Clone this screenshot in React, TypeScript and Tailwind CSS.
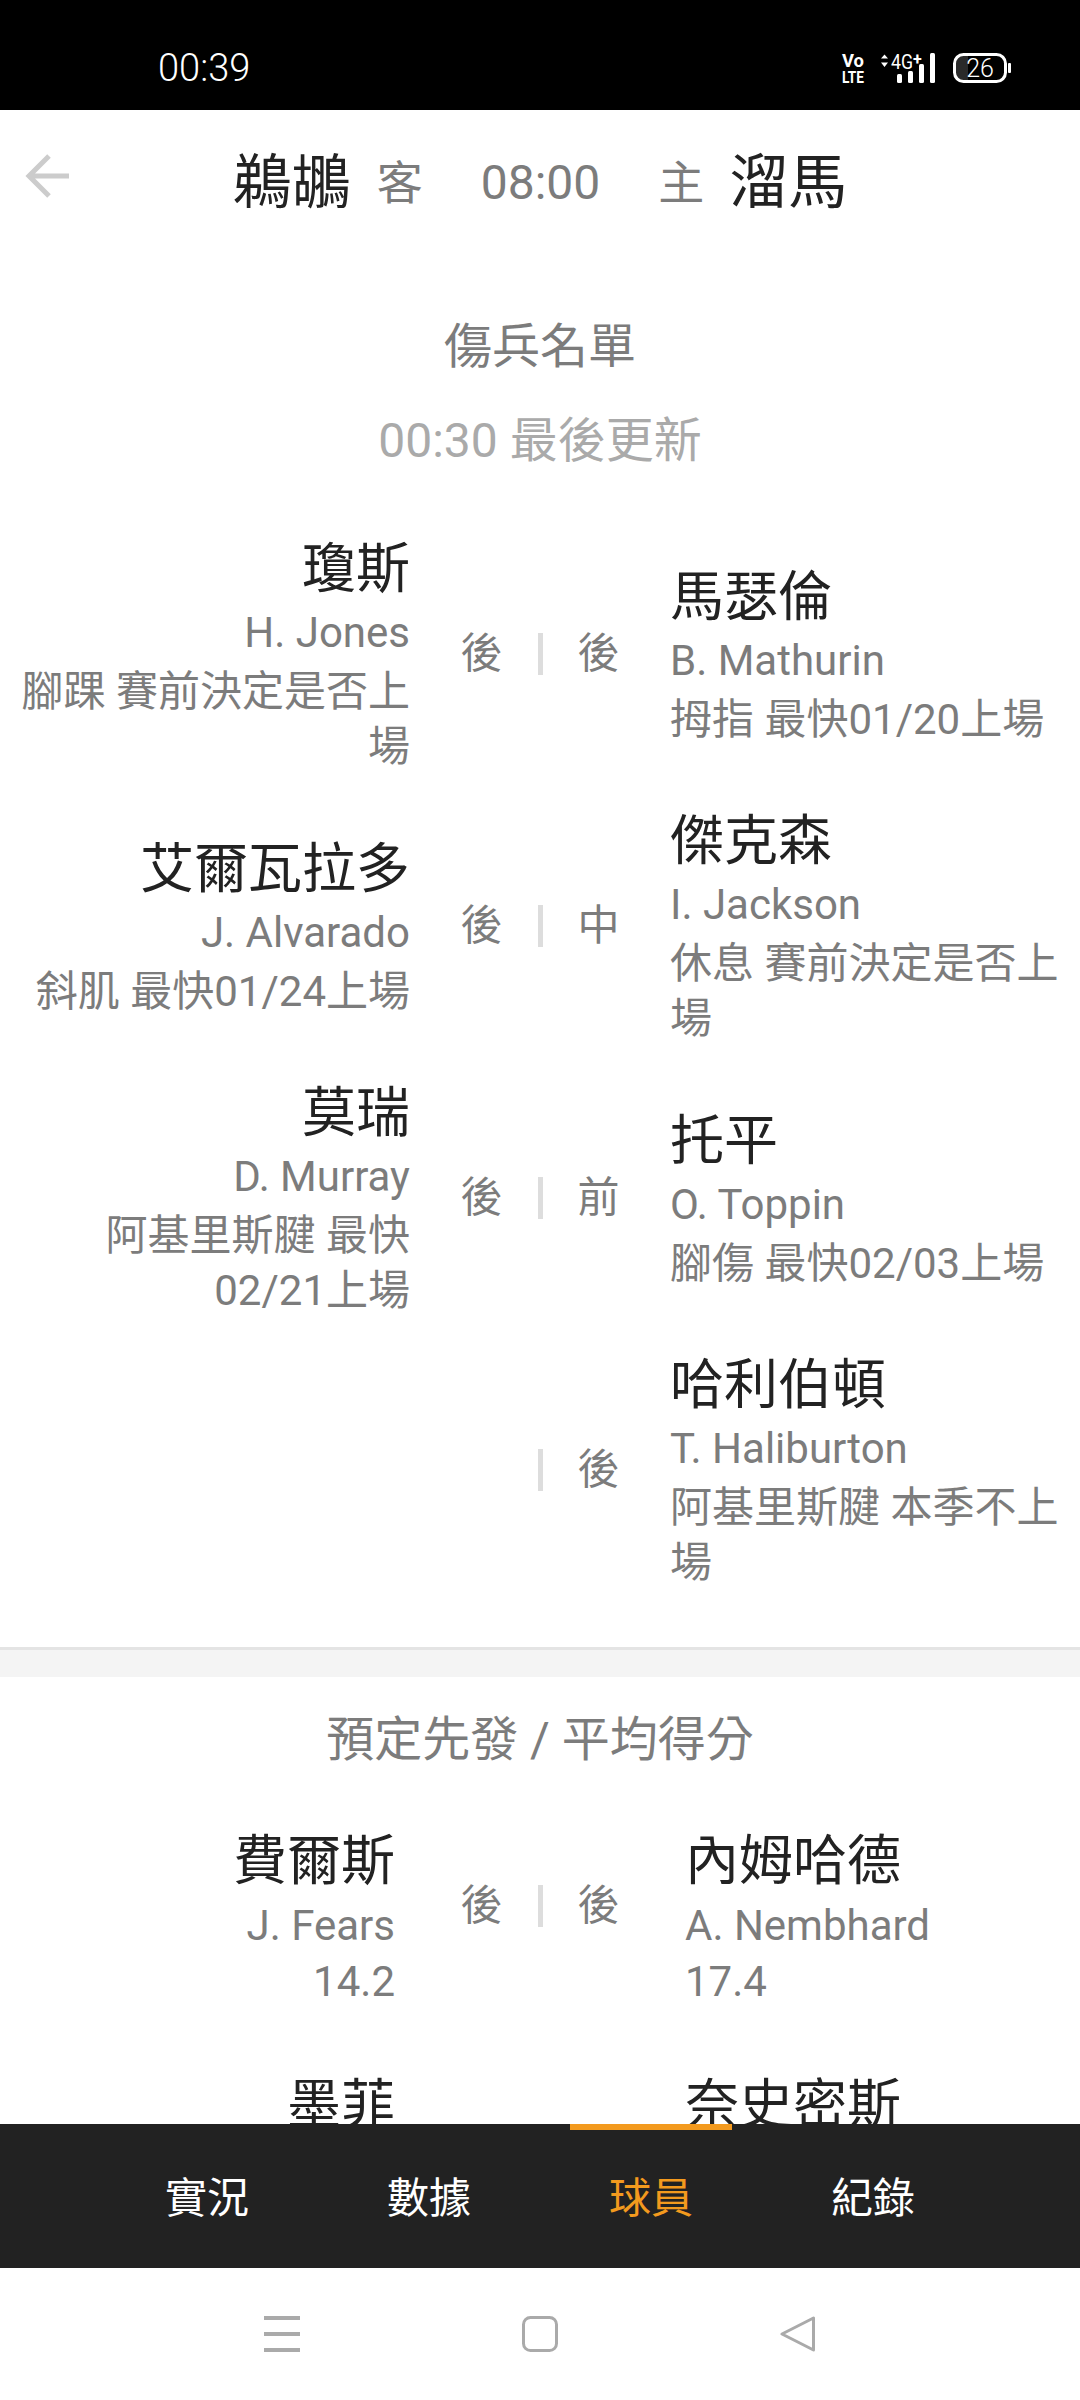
const sans = "font-['Roboto','Noto_Sans_CJK_TC','Noto_Sans',sans-serif]";

type Side = { name: string; en?: string; note?: string; pos?: string };

function Block({ p, align }: { p: Side; align: 'left' | 'right' }) {
  return (
    <div className={align === 'right' ? 'text-right' : 'text-left'}>
      <div className="mt-[1px] -mb-[1px] text-[54px] leading-[72px] text-[#222222]">{p.name}</div>
      {p.en && <div className="text-[42px] leading-[56px] text-[#7c7c7c]">{p.en}</div>}
      {p.note && <div className="mt-[3px] text-[42px] leading-[55px] text-[#7c7c7c]">{p.note}</div>}
    </div>
  );
}

function Middle({ left, right }: { left?: string; right?: string }) {
  return (
    <div className="flex items-center justify-center gap-[35px] text-[42px] leading-[54px] text-[#7c7c7c]">
      <span className="w-[42px] text-center">{left}</span>
      <span className="h-[42px] w-[5px] bg-[#dddddd]" />
      <span className="w-[42px] text-center">{right}</span>
    </div>
  );
}

function InjuryRow({ l, r }: { l?: Side; r: Side }) {
  return (
    <div className="flex items-center">
      <div className="w-[410px] shrink-0 pl-[20px]">{l && <Block p={l} align="right" />}</div>
      <div className="w-[260px] shrink-0">
        <Middle left={l?.pos} right={r.pos} />
      </div>
      <div className="w-[395px] shrink-0">
        <Block p={r} align="left" />
      </div>
    </div>
  );
}

function StarterRow({ l, r }: { l: Side; r: Side }) {
  return (
    <div className="flex items-center">
      <div className="w-[395px] shrink-0">
        <StarterBlock p={l} align="right" />
      </div>
      <div className="w-[290px] shrink-0 pb-[24px]">{l.pos && <Middle left={l.pos} right={r.pos} />}</div>
      <div className="w-[395px] shrink-0">
        <StarterBlock p={r} align="left" />
      </div>
    </div>
  );
}

function StarterBlock({ p, align }: { p: Side; align: 'left' | 'right' }) {
  return (
    <div className={align === 'right' ? 'text-right' : 'text-left'}>
      <div className="text-[54px] leading-[72px] text-[#222222]">{p.name}</div>
      {p.en && <div className="text-[42px] leading-[56px] text-[#7c7c7c]">{p.en}</div>}
      {p.note && <div className="text-[42px] leading-[56px] text-[#7c7c7c]">{p.note}</div>}
    </div>
  );
}

function StatusIcons() {
  return (
    <svg width="180" height="40" viewBox="840 50 180 40" className="block">
      <text x="853" y="68" fill="#fff" fontSize="18" fontWeight="700" textAnchor="middle" fontFamily="Roboto, sans-serif" textLength="22" lengthAdjust="spacingAndGlyphs">Vo</text>
      <text x="853" y="84" fill="#fff" fontSize="16" fontWeight="700" textAnchor="middle" fontFamily="Roboto, sans-serif" textLength="22" lengthAdjust="spacingAndGlyphs">LTE</text>
      <path d="M881 59.5L884.5 55.5L888 59.5ZM881 63.5L884.5 68L888 63.5Z" fill="#fff" />
      <text x="891" y="70" fill="#fff" fontSize="20" fontFamily="Roboto, sans-serif" textLength="22" lengthAdjust="spacingAndGlyphs">4G</text>
      <text x="913" y="66" fill="#fff" fontSize="16" fontWeight="700" fontFamily="Roboto, sans-serif">+</text>
      <rect x="897" y="75" width="5" height="9" rx="1.5" fill="#fff" />
      <rect x="908" y="72" width="5" height="12" rx="1.5" fill="#fff" />
      <rect x="919" y="65" width="5" height="19" rx="1.5" fill="#fff" />
      <rect x="930" y="54" width="5" height="30" rx="1.5" fill="#fff" />
      <rect x="956" y="57" width="12" height="24" fill="#2a2a2a" />
      <rect x="954.5" y="55.5" width="51" height="27" rx="9" fill="none" stroke="#fff" strokeWidth="3" />
      <rect x="1008" y="64" width="3" height="10" rx="1" fill="#fff" />
      <text x="980" y="78" fill="#fff" fontSize="25" fontWeight="300" textAnchor="middle" fontFamily="Roboto, sans-serif">26</text>
    </svg>
  );
}

export default function App() {
  return (
    <div className={`flex h-[2400px] w-[1080px] flex-col overflow-hidden bg-white ${sans}`}>
      <div className="flex h-[110px] shrink-0 items-center justify-between bg-black pl-[158px] pr-[60px] pt-[28px]">
        <span className="-mt-[2px] text-[38px] font-light leading-none text-white">00:39</span>
        <div className="-mt-[1px]">
          <StatusIcons />
        </div>
      </div>

      <div className="relative flex h-[146px] shrink-0 items-center justify-center">
        <svg className="absolute left-[25px] top-[43px]" width="46" height="46" viewBox="0 0 46 46" fill="none" stroke="#cccccc" strokeWidth="5">
          <path d="M44 23H5M24 3L4 23L24 43" />
        </svg>
        <span className="text-[59px] leading-[72px] text-[#222222]">鵜鶘</span>
        <span className="ml-[26px] text-[46px] leading-[60px] text-[#7c7c7c]">客</span>
        <span className="ml-[58px] text-[48px] leading-[60px] text-[#7c7c7c]">08:00</span>
        <span className="ml-[58px] text-[46px] leading-[60px] text-[#7c7c7c]">主</span>
        <span className="ml-[25px] text-[59px] leading-[72px] text-[#222222]">溜馬</span>
      </div>

      <div className="relative min-h-0 flex-1 overflow-hidden">
        <div className="pt-[61px] text-center text-[48px] leading-[60px] text-[#7c7c7c]">傷兵名單</div>
        <div className="mt-[34px] text-center text-[48px] leading-[60px] text-[#aaaaaa]">00:30 最後更新</div>

        <div className="mt-[62px] flex flex-col gap-[31px]">
          <InjuryRow
            l={{ name: '瓊斯', en: 'H. Jones', note: '腳踝 賽前決定是否上場', pos: '後' }}
            r={{ name: '馬瑟倫', en: 'B. Mathurin', note: '拇指 最快01/20上場', pos: '後' }}
          />
          <InjuryRow
            l={{ name: '艾爾瓦拉多', en: 'J. Alvarado', note: '斜肌 最快01/24上場', pos: '後' }}
            r={{ name: '傑克森', en: 'I. Jackson', note: '休息 賽前決定是否上場', pos: '中' }}
          />
          <InjuryRow
            l={{ name: '莫瑞', en: 'D. Murray', note: '阿基里斯腱 最快02/21上場', pos: '後' }}
            r={{ name: '托平', en: 'O. Toppin', note: '腳傷 最快02/03上場', pos: '前' }}
          />
          <InjuryRow r={{ name: '哈利伯頓', en: 'T. Haliburton', note: '阿基里斯腱 本季不上場', pos: '後' }} />
        </div>

        <div className="mt-[57px] h-[30px] border-t-[3px] border-[#e4e4e4] bg-[#f4f4f4]" />

        <div className="mt-[33px] text-center text-[48px] leading-[60px] text-[#7c7c7c]">預定先發 / 平均得分</div>

        <div className="mt-[56px] flex flex-col gap-[60px]">
          <StarterRow
            l={{ name: '費爾斯', en: 'J. Fears', note: '14.2', pos: '後' }}
            r={{ name: '內姆哈德', en: 'A. Nembhard', note: '17.4', pos: '後' }}
          />
          <StarterRow l={{ name: '墨菲' }} r={{ name: '奈史密斯' }} />
        </div>
      </div>

      <div className="relative h-[144px] shrink-0 bg-[#222222]">
        <div className="absolute left-[570px] top-0 h-[6px] w-[162px] bg-[#f39a1e]" />
        <div className="grid h-full grid-cols-4 px-[96px] text-center text-[42px] leading-[149px] text-white">
          <span>實況</span>
          <span>數據</span>
          <span className="text-[#f39a1e]">球員</span>
          <span>紀錄</span>
        </div>
      </div>

      <div className="flex h-[132px] shrink-0 items-start pt-[48px]">
        <svg className="ml-[264px]" width="36" height="36" viewBox="0 0 36 36" fill="#aaaaaa">
          <rect x="0" y="0" width="36" height="4" />
          <rect x="0" y="16" width="36" height="4" />
          <rect x="0" y="32" width="36" height="4" />
        </svg>
        <svg className="ml-[222px]" width="36" height="36" viewBox="0 0 36 36" fill="none" stroke="#aaaaaa" strokeWidth="3">
          <rect x="1.5" y="1.5" width="33" height="33" rx="7" />
        </svg>
        <svg className="ml-[222px]" width="36" height="36" viewBox="0 0 36 36" fill="none" stroke="#aaaaaa" strokeWidth="3" strokeLinejoin="round">
          <path d="M33.5 2V34L2 18Z" />
        </svg>
      </div>
    </div>
  );
}
